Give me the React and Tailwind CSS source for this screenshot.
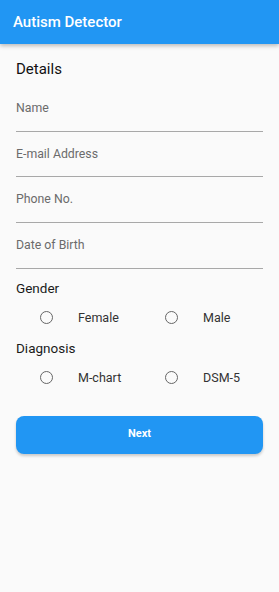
import React from "react";

function Field({ label }) {
  return (
    <div className="h-[45.67px] border-b border-[#a8a8a8] pt-[14px]">
      <div className="text-[12.3px] leading-[16px] text-[#6b6b6b]">{label}</div>
    </div>
  );
}

function Radio({ label, wide }) {
  return (
    <div className={`flex items-center ${wide ? "w-[125px]" : ""}`}>
      <div className="w-[13px] h-[13px] rounded-full border-[1.7px] border-[#666666]" />
      <div className="ml-[25px] text-[12.5px] leading-[16px] text-[#333333]">{label}</div>
    </div>
  );
}

export default function App() {
  return (
    <div
      className="w-[279px] h-[592px] bg-[#fafafa] overflow-hidden"
      style={{ fontFamily: "Roboto, 'Noto Sans', sans-serif" }}
    >
      <div className="h-[44px] bg-[#2196f3] flex items-center px-[13px] shadow-[0_2px_4px_rgba(0,0,0,0.25)] relative z-10">
        <span className="text-white text-[15px] font-medium leading-[20px]">Autism Detector</span>
      </div>
      <div className="px-[16px] pt-[15px]">
        <div className="text-[15px] leading-[20px] text-[#111111] h-[27px]">Details</div>
        <Field label="Name" />
        <Field label="E-mail Address" />
        <Field label="Phone No." />
        <Field label="Date of Birth" />
        <div className="mt-[9px] h-[20px] text-[13.5px] leading-[20px] text-[#1a1a1a]">Gender</div>
        <div className="h-[40px] flex items-center pl-[24px]">
          <Radio label="Female" wide />
          <Radio label="Male" />
        </div>
        <div className="h-[20px] text-[13.5px] leading-[20px] text-[#1a1a1a]">Diagnosis</div>
        <div className="h-[40px] flex items-center pl-[24px]">
          <Radio label="M-chart" wide />
          <Radio label="DSM-5" />
        </div>
        <button className="mt-[18px] w-full h-[38px] rounded-[8px] bg-[#2196f3] text-white text-[11px] font-bold shadow-[0_2px_3px_rgba(0,0,0,0.2)] flex items-center justify-center">
          Next
        </button>
      </div>
    </div>
  );
}
